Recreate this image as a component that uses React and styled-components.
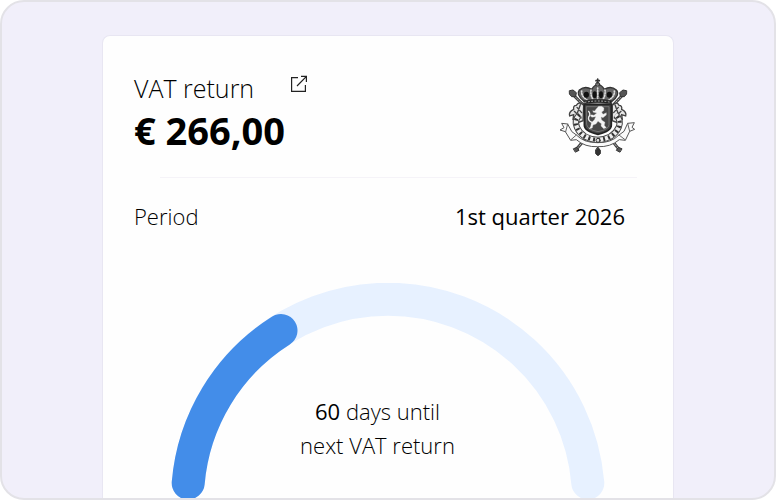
import styled, { createGlobalStyle } from 'styled-components';

const GlobalStyle = createGlobalStyle`
  * {
    box-sizing: border-box;
  }

  body {
    margin: 0;
    background: #fff;
    color: #000;
    font-family: 'Open Sans', 'Noto Sans', sans-serif;
  }
`;

function App() {
  return (
    <>
      <GlobalStyle />
      <Frame>
        <Card>
          <Header>
            <div>
              <TitleRow>
                <Title>VAT return</Title>
                <OpenLink href="#vat-return" aria-label="Open VAT return">
                  <ExternalIcon />
                </OpenLink>
              </TitleRow>
              <Amount>€ 266,00</Amount>
            </div>
            <Crest />
          </Header>
          <Divider />
          <PeriodRow>
            <Label>Period</Label>
            <Value>1st quarter 2026</Value>
          </PeriodRow>
          <Gauge>
            <GaugeArc />
            <GaugeText>
              <Days>60</Days> days until
              <br />
              next VAT return
            </GaugeText>
          </Gauge>
        </Card>
      </Frame>
    </>
  );
}

export default App;

function ExternalIcon() {
  return (
    <svg viewBox="0 0 18 18" width="18" height="18" fill="none" stroke="#222" strokeWidth="1.2">
      <path d="M8 2.6H1.6V16.4H15.4V10" />
      <path d="M7 11 16.2 1.6M11 1.4H16.4V7" />
    </svg>
  );
}

function GaugeArc() {
  return (
    <GaugeSvg viewBox="0 0 434 215" fill="none" strokeWidth="33" strokeLinecap="round">
      <path d="M17.2 200A200.5 200.5 0 0 1 416.8 200" stroke="#e7f1ff" />
      <path d="M17.2 200A200.5 200.5 0 0 1 110 47.5" stroke="#438de9" />
    </GaugeSvg>
  );
}

function Crest() {
  return (
    <CrestSvg viewBox="30 24 234 240" fill="none" stroke="#333" strokeLinecap="round">
      {/* crossed sceptres */}
      <g stroke="#444">
        <path d="M70 72 108 110M224 72 188 110M108 208 82 238M186 208 210 238" strokeWidth="9" />
        <path d="M70 72 108 110M224 72 188 110M108 208 82 238M186 208 210 238" stroke="#bbb" strokeWidth="3" strokeDasharray="5 5" />
      </g>
      <g fill="#555" strokeWidth="3">
        <path d="M62 62 72 60 82 68 80 80 68 80 62 73ZM232 62 222 60 212 68 214 80 226 80 232 73Z" />
        <path d="M74 236 84 232 90 241 80 246ZM218 236 208 232 202 241 212 246Z" />
      </g>
      {/* mantling */}
      <g strokeWidth="4" stroke="#444" fill="#e6e6e6">
        <path d="M104 106Q90 92 82 106 72 106 74 118 58 126 62 138L74 134 72 148 86 146 86 158 102 152Z" />
        <path d="M190 106Q204 92 210 106 220 106 218 118 234 126 230 138L218 134 220 148 206 146 206 158 190 152Z" />
        <path d="M84 112 98 128M76 124 96 144M94 104 84 132M208 112 194 128M216 124 196 144M198 104 208 132" />
      </g>
      {/* collar round the shield */}
      <path d="M92 134Q74 150 84 172 98 206 147 210 194 206 209 172 218 150 200 134" strokeWidth="19" stroke="#444" strokeLinecap="butt" />
      <path d="M92 134Q74 150 84 172 98 206 147 210 194 206 209 172 218 150 200 134" strokeWidth="13" stroke="#eee" strokeLinecap="butt" />
      <path d="M92 134Q74 150 84 172 98 206 147 210 194 206 209 172 218 150 200 134" strokeWidth="12" stroke="#333" strokeDasharray="6 9" strokeLinecap="butt" />
      {/* shield with the lion */}
      <path d="M106 103H187V165Q187 184 147 193 106 184 106 165Z" fill="#484848" stroke="#222" strokeWidth="5" />
      <path d="M113 110H180V164Q179 179 147 185 115 179 113 164Z" stroke="#888" strokeWidth="2" />
      <path
        d="M142 116 149 109 158 109 165 114 164 122 158 126 162 133 172 128 172 135 162 143 156 141 158 150 168 157 166 166 172 173 164 176 156 168 157 161 147 154 141 162 132 165 130 174 120 177 125 169 127 158 136 149 140 140 129 142 123 137 128 134 135 136 143 129 133 127 131 122 137 123Z"
        fill="#f4f4f4"
        stroke="#bbb"
        strokeWidth="1"
      />
      <path d="M129 157Q116 153 119 141 126 133 119 124" stroke="#eee" strokeWidth="4" />
      {/* crown */}
      <path d="M105 94Q80 74 91 60 108 46 128 58 137 44 147 44 157 44 166 58 186 46 202 60 214 74 189 94Z" fill="#666" strokeWidth="4" />
      <path d="M146 46V89M126 60Q124 76 132 88M168 60Q170 76 162 88M98 63Q96 78 114 90M196 63Q198 78 180 90" stroke="#ddd" strokeWidth="5" strokeDasharray="3 5" />
      <g fill="#111" stroke="none">
        <ellipse cx="112" cy="74" rx="8" ry="9" />
        <ellipse cx="137" cy="74" rx="6" ry="10" />
        <ellipse cx="156" cy="74" rx="6" ry="10" />
        <ellipse cx="181" cy="74" rx="8" ry="9" />
      </g>
      <path d="M106 92Q147 84 188 92V102Q147 94 106 102Z" fill="#222" strokeWidth="2" />
      <path d="M108 97Q147 89 186 97" stroke="#bbb" strokeWidth="3" strokeDasharray="3 7" />
      <circle cx="146" cy="43" r="6" fill="#777" strokeWidth="3" />
      <path d="M146 27V38M141 32H151" strokeWidth="5" />
      {/* motto ribbon */}
      <path
        d="M82 195Q105 219 146 218 187 219 210 195L225 184 236 160 256 158 249 172 257 178 242 184 229 211 211 209Q184 232 146 230 108 232 82 209L65 211 49 185 33 180 45 173 38 160 56 162 68 184Z"
        fill="#fafafa"
        stroke="#555"
        strokeWidth="3"
      />
      <path d="M56 162 50 185M82 195 66 209M236 160 242 184M210 195 228 209" stroke="#666" strokeWidth="3" />
      {/* hanging medal */}
      <circle cx="147" cy="211" r="6" fill="#ddd" strokeWidth="3" />
      <path d="M147 232 154 241 154 251 147 257 140 251 140 241Z" fill="#333" strokeWidth="3" />
    </CrestSvg>
  );
}

const Frame = styled.main`
  min-height: 100vh;
  padding: 33px 16px 0;
  border: 2px solid #e3e2e7;
  border-radius: 24px;
  background: #f1effa;
  overflow: hidden;
`;

const Card = styled.section`
  max-width: 572px;
  margin: 0 auto;
  padding: 32px 36px 0 31px;
  border: 1px solid #e8e6f2;
  border-bottom: 0;
  border-radius: 8px 8px 0 0;
  background: #fefefe;
`;

const Header = styled.header`
  display: flex;
  justify-content: space-between;
  align-items: flex-start;
  height: 109px;
`;

const TitleRow = styled.div`
  display: flex;
  align-items: center;
  gap: 36px;
`;

const Title = styled.h1`
  margin: 0;
  font-size: 25px;
  font-weight: 300;
  line-height: 40px;
`;

const OpenLink = styled.a`
  display: flex;
  padding-bottom: 8px;
`;

const Amount = styled.div`
  font-size: 38px;
  font-weight: 700;
  line-height: 44px;
`;

const CrestSvg = styled.svg`
  flex: none;
  width: 78px;
  height: 80px;
  margin-top: 10px;
`;

const Divider = styled.hr`
  margin: 0 0 0 26px;
  border: 0;
  border-top: 1px solid #f5f3f8;
`;

const PeriodRow = styled.div`
  display: flex;
  justify-content: space-between;
  padding: 21px 12px 0 0;
  font-size: 22px;
  line-height: 34px;
`;

const Label = styled.span`
  font-weight: 300;
`;

const Value = styled.span`
  font-weight: 400;
`;

const Gauge = styled.div`
  display: grid;
  justify-items: center;
  padding: 50px 0 0 4px;
`;

const GaugeSvg = styled.svg`
  grid-area: 1 / 1;
  display: block;
  width: 100%;
  max-width: 434px;
`;

const GaugeText = styled.p`
  grid-area: 1 / 1;
  align-self: end;
  margin: 0;
  padding: 0 20px 36px 0;
  font-size: 22px;
  font-weight: 300;
  line-height: 34px;
  text-align: center;
`;

const Days = styled.strong`
  font-weight: 400;
`;
